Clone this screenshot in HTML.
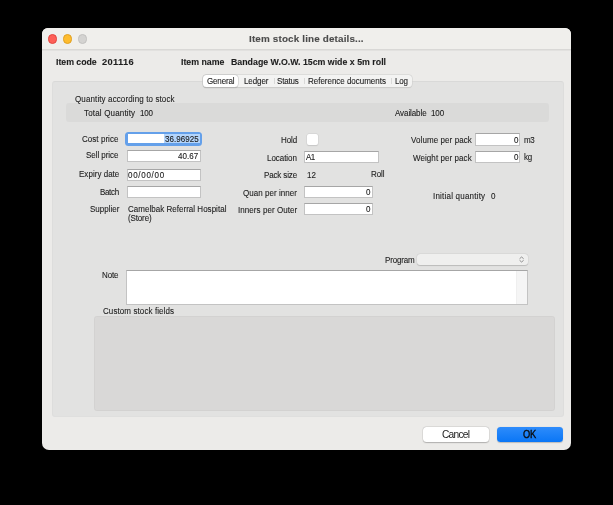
<!DOCTYPE html>
<html><head><meta charset="utf-8"><style>
html,body{margin:0;padding:0;}
body{width:613px;height:505px;background:#000;position:relative;overflow:hidden;font-family:"Liberation Sans",sans-serif;}
.a{position:absolute;box-sizing:border-box;}
.t{position:absolute;white-space:nowrap;line-height:12px;-webkit-text-stroke:0.1px currentColor;will-change:transform;font-family:"Liberation Sans",sans-serif;}
#win{left:42px;top:28px;width:529px;height:422px;background:#ecebe9;border-radius:6px 6px 7px 7px;overflow:hidden;}
#tb{left:0;top:0;width:529px;height:21px;background:#f0efec;}
#sep1{left:0;top:21px;width:529px;height:1px;background:#d9d8d6;}
#sep2{left:0;top:22px;width:529px;height:1px;background:#e2e1df;}
.dot{width:9.2px;height:9.2px;border-radius:50%;top:34.4px;}
#panel{left:52px;top:81px;width:511.5px;height:335.5px;background:#e2e2e1;border-radius:3px;border-top:1px solid #d9d9d8;border-left:1px solid #dddddc;border-right:1px solid #dddddc;border-bottom:1px solid #dfdfde;}
#qty{left:66px;top:103.2px;width:483px;height:18.8px;background:#dadad9;border-radius:3px;}
#tabs{left:203px;top:75px;width:209px;height:12.2px;background:#f3f3f2;border-radius:3.5px;box-shadow:0 0 0 0.5px #cfcfce, 0 0.5px 1px rgba(0,0,0,0.12);}
#gen{left:203px;top:75px;width:35.4px;height:12.2px;background:#fff;border-radius:3.5px;box-shadow:0 0 0 0.5px #c5c5c5, 0 0.5px 1px rgba(0,0,0,0.2);}
.tsep{width:1px;top:77.6px;height:6.6px;background:#d9d9d8;}
.inp{background:#fff;border:1px solid #c3c3c3;border-top-color:#a6a6a6;}
#focus{left:125.4px;top:131.8px;width:76.8px;height:13.8px;border-radius:3.5px;background:#64a0ea;}
#focin{left:127.6px;top:134px;width:72px;height:9.2px;background:#fff;}
#sel{left:164px;top:134px;width:36px;height:9.2px;background:#b4d5fb;}
#chk{left:307.4px;top:134.4px;width:10.3px;height:10.3px;background:#fff;border-radius:2px;box-shadow:0 0 0 0.5px #cfcfcf,0 0.5px 1px rgba(0,0,0,0.15);}
#note{left:126.4px;top:270.2px;width:401.8px;height:34.6px;}
#scr{left:515.7px;top:271.2px;width:11.5px;height:32.6px;background:#f5f5f5;border-left:1px solid #efefef;}
#prog{left:417.4px;top:253.8px;width:110.2px;height:11.4px;background:#efefee;border-radius:3px;box-shadow:0 0.5px 1px rgba(0,0,0,0.15),0 0 0 0.5px #d6d6d6;}
#custom{left:94.2px;top:316px;width:460.8px;height:94.8px;background:#d9d8d7;border-radius:3px;box-shadow:inset 0 0 0 1px rgba(0,0,0,0.025);}
#cancel{left:423.2px;top:426.8px;width:65.9px;height:15.1px;background:#fff;border-radius:3.5px;box-shadow:0 0 0 0.5px rgba(0,0,0,0.09),0 0.6px 1.2px rgba(0,0,0,0.22);}
#ok{left:497px;top:426.8px;width:65.7px;height:14.9px;background:linear-gradient(#2e8cfb,#0a76f6);border-radius:3.5px;box-shadow:0 0.5px 1px rgba(0,0,0,0.2);}

.ns{-webkit-text-stroke:0;}
.ok{-webkit-text-stroke:0.3px currentColor;}

</style></head><body>
<div id="win" class="a">
 <div id="tb" class="a"></div>
 <div id="sep1" class="a"></div>
 <div id="sep2" class="a"></div>
</div>
<div class="a dot" style="left:48px;background:#fe5f57;border:0.6px solid #e2463f;"></div>
<div class="a dot" style="left:63px;background:#febc2e;border:0.6px solid #dfa023;"></div>
<div class="a dot" style="left:78px;background:#d4d3d1;border:0.6px solid #c2c1bf;"></div>
<div id="panel" class="a"></div>
<div id="qty" class="a"></div>
<div id="tabs" class="a"></div>
<div id="gen" class="a"></div>
<div class="a tsep" style="left:273.5px"></div>
<div class="a tsep" style="left:304px"></div>
<div class="a tsep" style="left:391px"></div>
<div id="focus" class="a"></div>
<div id="focin" class="a"></div>
<div id="sel" class="a"></div>
<div class="a inp" style="left:126.5px;top:150.3px;width:74.5px;height:11.5px"></div>
<div class="a inp" style="left:126.5px;top:169.2px;width:74.5px;height:11.5px"></div>
<div class="a inp" style="left:126.5px;top:186.3px;width:74.5px;height:11.5px"></div>
<div id="chk" class="a"></div>
<div class="a inp" style="left:304.2px;top:151.2px;width:74.6px;height:12.3px"></div>
<div class="a inp" style="left:304.2px;top:186.2px;width:68.8px;height:11.6px"></div>
<div class="a inp" style="left:304.2px;top:203.3px;width:68.8px;height:12.2px"></div>
<div class="a inp" style="left:475.2px;top:133.4px;width:44.5px;height:12.3px"></div>
<div class="a inp" style="left:475.2px;top:151.3px;width:44.5px;height:12.2px"></div>
<div id="prog" class="a"></div>
<svg class="a" style="left:518px;top:256px" width="8" height="8" viewBox="0 0 8 8"><path d="M1.6 2.7 L3.6 1.0 L5.6 2.7 M1.6 4.3 L3.6 6.0 L5.6 4.3" fill="none" stroke="#888888" stroke-width="0.95"/></svg>
<div id="note" class="a inp"></div>
<div id="scr" class="a"></div>
<div id="custom" class="a"></div>
<div id="cancel" class="a"></div>
<div id="ok" class="a"></div>

<div class="t" style="left:248.50px;top:32.97px;font-size:9.90px;letter-spacing:0.150px;color:#4b4b4b;font-weight:bold;">Item stock line details...</div>
<div class="t" style="left:56.20px;top:55.85px;font-size:8.80px;letter-spacing:-0.038px;color:#1e1e1e;font-weight:bold;">Item code</div>
<div class="t" style="left:101.70px;top:55.68px;font-size:9.30px;letter-spacing:0.340px;color:#1e1e1e;font-weight:bold;">201116</div>
<div class="t" style="left:180.50px;top:55.85px;font-size:8.80px;letter-spacing:-0.006px;color:#1e1e1e;font-weight:bold;">Item name</div>
<div class="t" style="left:231.40px;top:55.85px;font-size:8.80px;letter-spacing:0.002px;color:#1e1e1e;font-weight:bold;">Bandage W.O.W. 15cm wide x 5m roll</div>
<div class="t" style="left:207.00px;top:75.83px;font-size:8.00px;letter-spacing:-0.158px;color:#1e1e1e;transform:scaleY(1.080);transform-origin:0 8.77px;">General</div>
<div class="t" style="left:243.90px;top:75.83px;font-size:8.00px;letter-spacing:-0.080px;color:#1e1e1e;transform:scaleY(1.080);transform-origin:0 8.77px;">Ledger</div>
<div class="t" style="left:277.30px;top:75.83px;font-size:8.00px;letter-spacing:-0.200px;color:#1e1e1e;transform:scaleY(1.080);transform-origin:0 8.77px;">Status</div>
<div class="t" style="left:308.20px;top:75.83px;font-size:8.00px;letter-spacing:-0.019px;color:#1e1e1e;transform:scaleY(1.080);transform-origin:0 8.77px;">Reference documents</div>
<div class="t" style="left:395.00px;top:75.83px;font-size:8.00px;letter-spacing:-0.225px;color:#1e1e1e;transform:scaleY(1.080);transform-origin:0 8.77px;">Log</div>
<div class="t" style="left:75.40px;top:94.03px;font-size:8.00px;letter-spacing:0.117px;color:#1e1e1e;transform:scaleY(1.080);transform-origin:0 8.77px;">Quantity according to stock</div>
<div class="t" style="left:84.40px;top:107.83px;font-size:8.00px;letter-spacing:0.169px;color:#1e1e1e;transform:scaleY(1.080);transform-origin:0 8.77px;">Total Quantity</div>
<div class="t" style="left:140.00px;top:107.83px;font-size:8.00px;letter-spacing:-0.225px;color:#1e1e1e;transform:scaleY(1.080);transform-origin:0 8.77px;">100</div>
<div class="t" style="left:394.70px;top:107.83px;font-size:8.00px;letter-spacing:-0.087px;color:#1e1e1e;transform:scaleY(1.080);transform-origin:0 8.77px;">Available</div>
<div class="t" style="left:430.70px;top:107.83px;font-size:8.00px;letter-spacing:-0.125px;color:#1e1e1e;transform:scaleY(1.080);transform-origin:0 8.77px;">100</div>
<div class="t" style="left:82.20px;top:134.43px;font-size:8.00px;letter-spacing:0.044px;color:#1e1e1e;transform:scaleY(1.080);transform-origin:0 8.77px;">Cost price</div>
<div class="t" style="left:164.50px;top:133.53px;font-size:8.00px;letter-spacing:0.064px;color:#1a1a1a;transform:scaleY(1.080);transform-origin:0 8.77px;">36.96925</div>
<div class="t" style="left:280.80px;top:135.33px;font-size:8.00px;letter-spacing:-0.117px;color:#1e1e1e;transform:scaleY(1.080);transform-origin:0 8.77px;">Hold</div>
<div class="t" style="left:411.00px;top:135.23px;font-size:8.00px;letter-spacing:0.089px;color:#1e1e1e;transform:scaleY(1.080);transform-origin:0 8.77px;">Volume per pack</div>
<div class="t" style="left:514.00px;top:135.03px;font-size:8.00px;letter-spacing:0.000px;color:#1a1a1a;transform:scaleY(1.080);transform-origin:0 8.77px;">0</div>
<div class="t" style="left:523.50px;top:135.03px;font-size:8.00px;letter-spacing:-0.400px;color:#1e1e1e;transform:scaleY(1.080);transform-origin:0 8.77px;">m3</div>
<div class="t" style="left:86.10px;top:149.63px;font-size:8.00px;letter-spacing:-0.044px;color:#1e1e1e;transform:scaleY(1.080);transform-origin:0 8.77px;">Sell price</div>
<div class="t" style="left:178.10px;top:150.63px;font-size:8.00px;letter-spacing:0.050px;color:#1a1a1a;transform:scaleY(1.080);transform-origin:0 8.77px;">40.67</div>
<div class="t" style="left:267.00px;top:153.33px;font-size:8.00px;letter-spacing:-0.050px;color:#1e1e1e;transform:scaleY(1.080);transform-origin:0 8.77px;">Location</div>
<div class="t" style="left:305.70px;top:152.33px;font-size:8.00px;letter-spacing:-0.500px;color:#1a1a1a;transform:scaleY(1.080);transform-origin:0 8.77px;">A1</div>
<div class="t" style="left:413.20px;top:152.53px;font-size:8.00px;letter-spacing:0.071px;color:#1e1e1e;transform:scaleY(1.080);transform-origin:0 8.77px;">Weight per pack</div>
<div class="t" style="left:514.00px;top:152.33px;font-size:8.00px;letter-spacing:0.000px;color:#1a1a1a;transform:scaleY(1.080);transform-origin:0 8.77px;">0</div>
<div class="t" style="left:523.50px;top:152.33px;font-size:8.00px;letter-spacing:-0.150px;color:#1e1e1e;transform:scaleY(1.080);transform-origin:0 8.77px;">kg</div>
<div class="t" style="left:78.50px;top:168.83px;font-size:8.00px;letter-spacing:0.030px;color:#1e1e1e;transform:scaleY(1.080);transform-origin:0 8.77px;">Expiry date</div>
<div class="t" style="left:128.40px;top:169.93px;font-size:8.00px;letter-spacing:0.721px;color:#1a1a1a;transform:scaleY(1.080);transform-origin:0 8.77px;">00/00/00</div>
<div class="t" style="left:263.90px;top:170.03px;font-size:8.00px;letter-spacing:-0.144px;color:#1e1e1e;transform:scaleY(1.080);transform-origin:0 8.77px;">Pack size</div>
<div class="t" style="left:306.50px;top:169.73px;font-size:8.00px;letter-spacing:0.000px;color:#1e1e1e;transform:scaleY(1.080);transform-origin:0 8.77px;">12</div>
<div class="t" style="left:371.00px;top:168.53px;font-size:8.00px;letter-spacing:-0.067px;color:#1e1e1e;transform:scaleY(1.080);transform-origin:0 8.77px;">Roll</div>
<div class="t" style="left:99.70px;top:186.83px;font-size:8.00px;letter-spacing:-0.338px;color:#1e1e1e;transform:scaleY(1.080);transform-origin:0 8.77px;">Batch</div>
<div class="t" style="left:243.00px;top:188.33px;font-size:8.00px;letter-spacing:0.050px;color:#1e1e1e;transform:scaleY(1.080);transform-origin:0 8.77px;">Quan per inner</div>
<div class="t" style="left:366.20px;top:186.93px;font-size:8.00px;letter-spacing:0.000px;color:#1a1a1a;transform:scaleY(1.080);transform-origin:0 8.77px;">0</div>
<div class="t" style="left:432.50px;top:190.63px;font-size:8.00px;letter-spacing:0.213px;color:#1e1e1e;transform:scaleY(1.080);transform-origin:0 8.77px;">Initial quantity</div>
<div class="t" style="left:491.20px;top:190.63px;font-size:8.00px;letter-spacing:0.000px;color:#1e1e1e;transform:scaleY(1.080);transform-origin:0 8.77px;">0</div>
<div class="t" style="left:89.50px;top:204.03px;font-size:8.00px;letter-spacing:-0.007px;color:#1e1e1e;transform:scaleY(1.080);transform-origin:0 8.77px;">Supplier</div>
<div class="t" style="left:128.40px;top:204.23px;font-size:8.00px;letter-spacing:0.024px;color:#1e1e1e;transform:scaleY(1.080);transform-origin:0 8.77px;">Camelbak Referral Hospital</div>
<div class="t" style="left:128.40px;top:213.43px;font-size:8.00px;letter-spacing:-0.142px;color:#1e1e1e;transform:scaleY(1.080);transform-origin:0 8.77px;">(Store)</div>
<div class="t" style="left:237.80px;top:205.33px;font-size:8.00px;letter-spacing:0.063px;color:#1e1e1e;transform:scaleY(1.080);transform-origin:0 8.77px;">Inners per Outer</div>
<div class="t" style="left:366.20px;top:204.13px;font-size:8.00px;letter-spacing:0.000px;color:#1a1a1a;transform:scaleY(1.080);transform-origin:0 8.77px;">0</div>
<div class="t" style="left:384.90px;top:254.53px;font-size:8.00px;letter-spacing:-0.150px;color:#1e1e1e;transform:scaleY(1.080);transform-origin:0 8.77px;">Program</div>
<div class="t" style="left:102.20px;top:269.93px;font-size:8.00px;letter-spacing:-0.133px;color:#1e1e1e;transform:scaleY(1.080);transform-origin:0 8.77px;">Note</div>
<div class="t" style="left:102.70px;top:306.03px;font-size:8.00px;letter-spacing:0.092px;color:#1e1e1e;transform:scaleY(1.080);transform-origin:0 8.77px;">Custom stock fields</div>
<div class="t ns" style="left:442.20px;top:429.26px;font-size:10.20px;letter-spacing:-0.750px;color:#1c1c1c;">Cancel</div>
<div class="t ok" style="left:523.00px;top:428.68px;font-size:9.30px;letter-spacing:-0.350px;color:#0a0a0a;transform:scaleY(1.16);transform-origin:0 9.22px;">OK</div>
</body></html>
